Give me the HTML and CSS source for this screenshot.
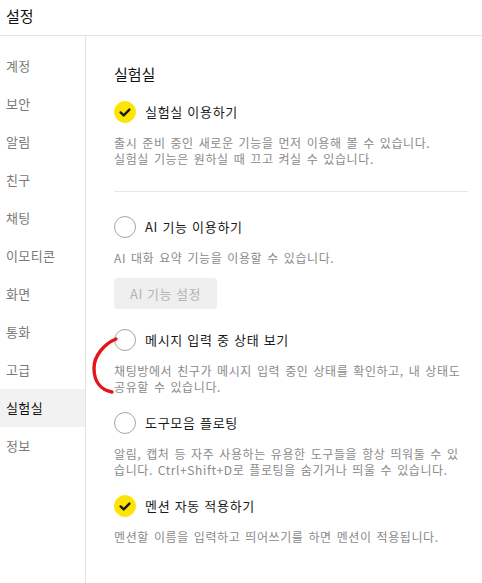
FILE: index.html
```html
<!DOCTYPE html>
<html lang="ko">
<head>
<meta charset="utf-8">
<link rel="stylesheet" href="styles.css">
</head>
<body>
<div class="app">
  <header class="header">설정</header>
  <div class="main">
    <nav class="sidebar">
      <div class="nav-item">계정</div>
      <div class="nav-item">보안</div>
      <div class="nav-item">알림</div>
      <div class="nav-item">친구</div>
      <div class="nav-item">채팅</div>
      <div class="nav-item">이모티콘</div>
      <div class="nav-item">화면</div>
      <div class="nav-item">통화</div>
      <div class="nav-item">고급</div>
      <div class="nav-item active">실험실</div>
      <div class="nav-item">정보</div>
    </nav>
    <section class="content">
      <h1 class="title">실험실</h1>

      <div class="option first">
        <div class="row">
          <span class="check on"><svg viewBox="0 0 22 22" width="22" height="22"><path d="M6.6 11.4 L9.7 14.4 L15.4 8.6" fill="none" stroke="#1a1a1a" stroke-width="2.4" stroke-linecap="round" stroke-linejoin="round"/></svg></span>
          <span class="label">실험실 이용하기</span>
        </div>
        <p class="desc">출시 준비 중인 새로운 기능을 먼저 이용해 볼 수 있습니다.<br>실험실 기능은 원하실 때 끄고 켜실 수 있습니다.</p>
      </div>

      <hr class="divider">

      <div class="option after-divider">
        <div class="row">
          <span class="check"></span>
          <span class="label">AI 기능 이용하기</span>
        </div>
        <p class="desc">AI 대화 요약 기능을 이용할 수 있습니다.</p>
        <button class="btn" disabled>AI 기능 설정</button>
      </div>

      <div class="option after-button">
        <div class="row">
          <span class="check"></span>
          <span class="label">메시지 입력 중 상태 보기</span>
        </div>
        <p class="desc">채팅방에서 친구가 메시지 입력 중인 상태를 확인하고, 내 상태도<br>공유할 수 있습니다.</p>
      </div>

      <div class="option">
        <div class="row">
          <span class="check"></span>
          <span class="label">도구모음 플로팅</span>
        </div>
        <p class="desc">알림, 캡처 등 자주 사용하는 유용한 도구들을 항상 띄워둘 수 있<br>습니다. Ctrl+Shift+D로 플로팅을 숨기거나 띄울 수 있습니다.</p>
      </div>

      <div class="option">
        <div class="row">
          <span class="check on"><svg viewBox="0 0 22 22" width="22" height="22"><path d="M6.6 11.4 L9.7 14.4 L15.4 8.6" fill="none" stroke="#1a1a1a" stroke-width="2.4" stroke-linecap="round" stroke-linejoin="round"/></svg></span>
          <span class="label">멘션 자동 적용하기</span>
        </div>
        <p class="desc">멘션할 이름을 입력하고 띄어쓰기를 하면 멘션이 적용됩니다.</p>
      </div>
    </section>
  </div>
  <svg class="scribble" width="40" height="70" viewBox="0 0 40 70"><path d="M28 3 C 16 8, 6 20, 6 32 C 6 46, 13 54, 24 56" fill="none" stroke="#e4141b" stroke-width="3.4" stroke-linecap="round"/></svg>
</div>
</body>
</html>
```
FILE: styles.css
```css
* { box-sizing: border-box; }
html, body { margin: 0; padding: 0; background: #fff; }
body {
  font-family: "Noto Sans CJK KR", "Noto Sans", sans-serif;
  color: #1e1e1e;
  width: 482px;
  height: 583px;
  overflow: hidden;
}
.app { position: relative; height: 583px; display: flex; flex-direction: column; }
.header {
  height: 36px;
  line-height: 31px;
  padding-left: 6px;
  font-size: 15px;
  color: #111;
  border-bottom: 1px solid #e3e3e3;
  flex: none;
}
.main { display: flex; flex: 1; }
.sidebar {
  width: 86px;
  flex: none;
  border-right: 1px solid #e3e3e3;
  padding-top: 11px;
}
.nav-item {
  height: 38px;
  line-height: 38px;
  padding-left: 6px;
  font-size: 13px;
  letter-spacing: 0.4px;
  color: #7a7a7a;
}
.nav-item.active { background: #f2f2f2; color: #111; }
.content { flex: 1; padding: 0 14px 0 28px; }
.title {
  margin: 28px 0 0;
  font-size: 15px;
  font-weight: normal;
  line-height: 20px;
  color: #111;
}
.option { margin-top: 17px; }
.option.first { margin-top: 17px; }
.option.after-divider { margin-top: 24px; }
.option.after-button { margin-top: 20px; }
.row { display: flex; align-items: center; height: 22px; }
.check {
  width: 22px; height: 22px; border-radius: 50%;
  border: 1px solid #a6a6a6;
  background: #fff;
  flex: none;
  margin-right: 9px;
  display: flex; align-items: center; justify-content: center;
}
.check.on { background: #fee500; border-color: #fee500; }
.check svg { display: block; margin: -1px; }
.label { font-size: 13px; color: #1a1a1a; line-height: 22px; letter-spacing: 0.7px; }
.desc {
  margin: 12px 0 0;
  font-size: 12px;
  line-height: 16px;
  color: #8a8a8a;
  letter-spacing: 0.6px;
  word-spacing: 1px;
  white-space: nowrap;
}
.divider { border: 0; border-top: 1px solid #e6e6e6; margin: 24px 0 0; height: 0; }
.btn {
  display: block;
  margin-top: 12px;
  width: 103px; height: 31px;
  border: 0; border-radius: 4px;
  background: #efefef;
  color: #b4b4b4;
  font-family: inherit;
  font-size: 13px;
  letter-spacing: 0.5px;
  padding: 0;
}
.scribble { position: absolute; left: 88px; top: 336px; }
```
